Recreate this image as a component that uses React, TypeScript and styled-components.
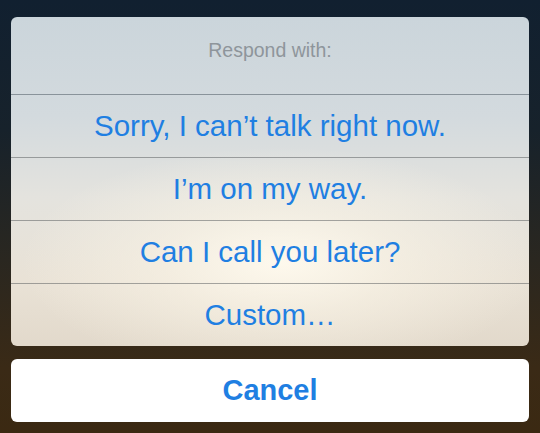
import styled, { createGlobalStyle } from "styled-components";

const GlobalStyle = createGlobalStyle`
  html, body {
    margin: 0;
    padding: 0;
  }
  body {
    width: 540px;
    height: 433px;
    overflow: hidden;
    font-family: "Liberation Sans", Arial, sans-serif;
  }
`;

const Screen = styled.div`
  width: 540px;
  height: 433px;
  box-sizing: border-box;
  padding: 17px 11px 11px;
  display: flex;
  flex-direction: column;
  gap: 13px;
  background: linear-gradient(
    180deg,
    #112030 0%,
    #17222b 30%,
    #2a2720 60%,
    #3a2a16 85%,
    #3b2912 100%
  );
`;

const Sheet = styled.div`
  display: flex;
  flex-direction: column;
  border-radius: 6px;
  overflow: hidden;
  background:
    radial-gradient(
      ellipse 260px 115px at 270px 245px,
      rgba(255, 250, 238, 0.95) 0%,
      rgba(250, 244, 230, 0.6) 45%,
      rgba(240, 234, 222, 0) 100%
    ),
    linear-gradient(
      180deg,
      #cbd5db 0%,
      #d3dade 30%,
      #e4e3de 55%,
      #e9e2d6 80%,
      #e2d9cb 100%
    );
`;

const Header = styled.div`
  height: 78px;
  box-sizing: border-box;
  padding-top: 22px;
  text-align: center;
  font-size: 19.5px;
  line-height: 22px;
  color: #8e959b;
  border-bottom: 1px solid rgba(88, 100, 110, 0.6);
`;

const Option = styled.div<{ $last?: boolean }>`
  height: 62px;
  display: flex;
  align-items: center;
  justify-content: center;
  font-size: 29.5px;
  color: #1f7fe2;
  border-bottom: ${(p) => (p.$last ? "none" : "1px solid rgba(95, 98, 100, 0.55)")};
`;

const CancelButton = styled.div`
  height: 63px;
  border-radius: 6px;
  background: #ffffff;
  display: flex;
  align-items: center;
  justify-content: center;
  font-size: 29px;
  font-weight: bold;
  color: #1f7fe2;
`;

const replies = [
  "Sorry, I can\u2019t talk right now.",
  "I\u2019m on my way.",
  "Can I call you later?",
  "Custom\u2026",
];

export default function App() {
  return (
    <>
      <GlobalStyle />
      <Screen>
        <Sheet>
          <Header>Respond with:</Header>
          {replies.map((text, i) => (
            <Option key={text} $last={i === replies.length - 1}>
              {text}
            </Option>
          ))}
        </Sheet>
        <CancelButton>Cancel</CancelButton>
      </Screen>
    </>
  );
}
